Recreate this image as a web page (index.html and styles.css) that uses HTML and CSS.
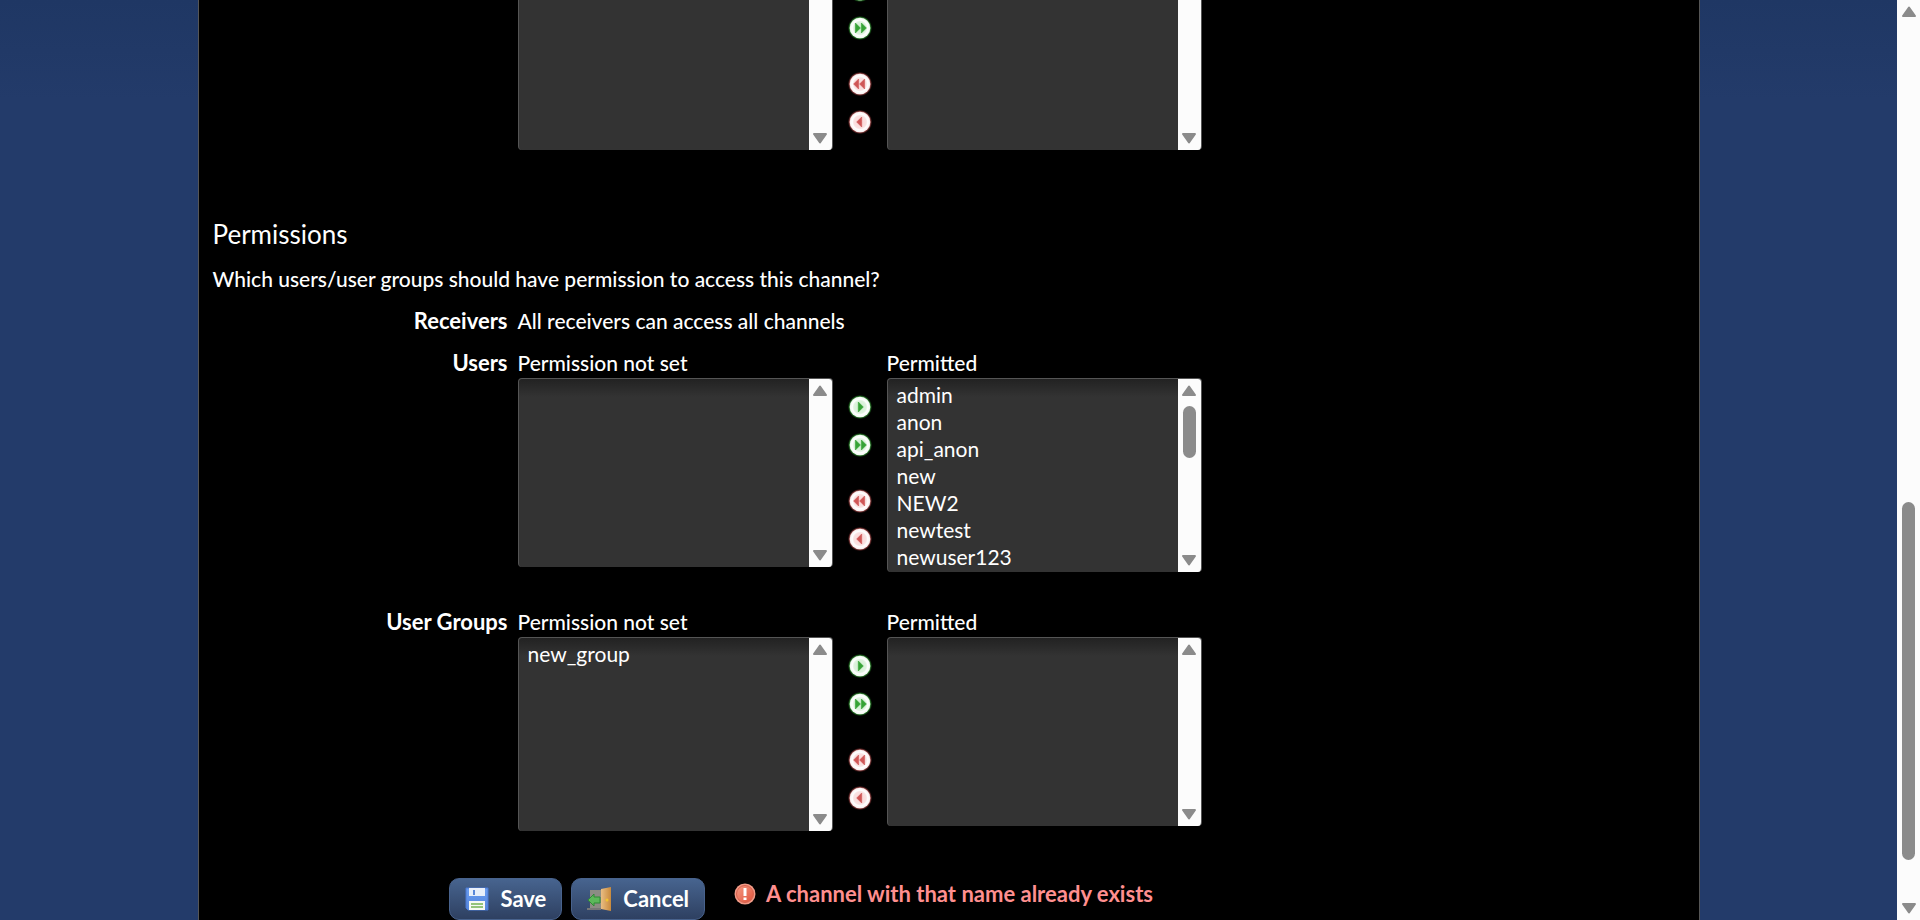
FILE: index.html
```
<!DOCTYPE html>
<html lang="en">
<head>
<meta charset="utf-8">
<title>Channel permissions</title>
<link rel="stylesheet" href="styles.css">
</head>
<body>
<svg class="defs" aria-hidden="true">
  <defs>
    <radialGradient id="green-glow"><stop offset="0.84" stop-color="#4aa54a"/><stop offset="1" stop-color="#0a4a0a" stop-opacity="0.2"/></radialGradient>
    <radialGradient id="red-glow"><stop offset="0.84" stop-color="#c06a6a"/><stop offset="1" stop-color="#5a1818" stop-opacity="0.2"/></radialGradient>
    <radialGradient id="green-face"><stop offset="0" stop-color="#cdeecd"/><stop offset="0.6" stop-color="#dff3df"/><stop offset="0.75" stop-color="#fff"/><stop offset="1" stop-color="#eef5ee"/></radialGradient>
    <radialGradient id="red-face"><stop offset="0" stop-color="#fbd6d6"/><stop offset="0.6" stop-color="#fae2e2"/><stop offset="0.75" stop-color="#fff"/><stop offset="1" stop-color="#f6eeee"/></radialGradient>
    <linearGradient id="alert" x1="0" y1="0" x2="1" y2="1"><stop offset="0" stop-color="#f59a82"/><stop offset="1" stop-color="#e0533c"/></linearGradient>
    <linearGradient id="disk" x1="0" y1="0" x2="0" y2="1"><stop offset="0" stop-color="#6a9df0"/><stop offset="1" stop-color="#5585dc"/></linearGradient>
    <linearGradient id="door" x1="0" y1="0" x2="1" y2="0"><stop offset="0" stop-color="#e9bd83"/><stop offset="1" stop-color="#c98a3c"/></linearGradient>
  </defs>
  <symbol id="add" viewBox="0 0 24 24"><circle cx="12" cy="12" r="12" fill="url(#green-glow)"/><circle cx="12" cy="12" r="10.3" fill="url(#green-face)"/><path d="M10.3 7l5 5-5 5z" fill="#36a336" stroke="#36a336" stroke-width=".6"/></symbol>
  <symbol id="add-all" viewBox="0 0 24 24"><circle cx="12" cy="12" r="12" fill="url(#green-glow)"/><circle cx="12" cy="12" r="10.3" fill="url(#green-face)"/><path d="M7.4 7l5 5-5 5zM13.4 7l5 5-5 5z" fill="#36a336" stroke="#36a336" stroke-width=".6"/></symbol>
  <symbol id="remove-all" viewBox="0 0 24 24"><circle cx="12" cy="12" r="12" fill="url(#red-glow)"/><circle cx="12" cy="12" r="10.3" fill="url(#red-face)"/><path d="M10.6 7l-5 5 5 5zM16.6 7l-5 5 5 5z" fill="#cf5656" stroke="#cf5656" stroke-width=".6"/></symbol>
  <symbol id="remove" viewBox="0 0 24 24"><circle cx="12" cy="12" r="12" fill="url(#red-glow)"/><circle cx="12" cy="12" r="10.3" fill="url(#red-face)"/><path d="M13.7 7l-5 5 5 5z" fill="#cf5656" stroke="#cf5656" stroke-width=".6"/></symbol>
  <symbol id="up" viewBox="0 0 16 12"><path d="M8 1.5L14 10H2z" fill="#8b8b8b" stroke="#8b8b8b" stroke-width="2" stroke-linejoin="round"/></symbol>
  <symbol id="down" viewBox="0 0 16 12"><path d="M8 10.5L14 2H2z" fill="#8b8b8b" stroke="#8b8b8b" stroke-width="2" stroke-linejoin="round"/></symbol>
</svg>

<div class="window">
  <div class="backdrop">
    <main class="page">
      <div class="row">
        <span class="row-label"></span>
        <div class="picker untitled">
          <div class="choice">
            <div class="listbox"><select multiple aria-label="Available"></select><div class="bar"><svg><use href="#up"/></svg><svg><use href="#down"/></svg></div></div>
          </div>
          <div class="moves">
            <button type="button" aria-label="Add"><svg><use href="#add"/></svg></button>
            <button type="button" aria-label="Add all"><svg><use href="#add-all"/></svg></button>
            <button type="button" aria-label="Remove all" class="split"><svg><use href="#remove-all"/></svg></button>
            <button type="button" aria-label="Remove"><svg><use href="#remove"/></svg></button>
          </div>
          <div class="choice">
            <div class="listbox"><select multiple aria-label="Selected"></select><div class="bar"><svg><use href="#up"/></svg><svg><use href="#down"/></svg></div></div>
          </div>
        </div>
      </div>

      <h2>Permissions</h2>
      <p>Which users/user groups should have permission to access this channel?</p>

      <div class="row">
        <span class="row-label">Receivers</span>
        <span>All receivers can access all channels</span>
      </div>

      <div class="row">
        <span class="row-label">Users</span>
        <div class="picker">
          <div class="choice">
            <label for="users-unset">Permission not set</label>
            <div class="listbox"><select multiple id="users-unset"></select><div class="bar"><svg><use href="#up"/></svg><svg><use href="#down"/></svg></div></div>
          </div>
          <div class="moves">
            <button type="button" aria-label="Permit user"><svg><use href="#add"/></svg></button>
            <button type="button" aria-label="Permit all users"><svg><use href="#add-all"/></svg></button>
            <button type="button" aria-label="Remove all users" class="split"><svg><use href="#remove-all"/></svg></button>
            <button type="button" aria-label="Remove user"><svg><use href="#remove"/></svg></button>
          </div>
          <div class="choice">
            <label for="users-permitted">Permitted</label>
            <div class="listbox filled"><select multiple id="users-permitted">
              <option>admin</option><option>anon</option><option>api_anon</option><option>new</option><option>NEW2</option><option>newtest</option><option>newuser123</option>
            </select><div class="bar"><svg><use href="#up"/></svg><span class="thumb"></span><svg><use href="#down"/></svg></div></div>
          </div>
        </div>
      </div>

      <div class="row">
        <span class="row-label">User Groups</span>
        <div class="picker">
          <div class="choice">
            <label for="groups-unset">Permission not set</label>
            <div class="listbox filled"><select multiple id="groups-unset"><option>new_group</option></select><div class="bar"><svg><use href="#up"/></svg><svg><use href="#down"/></svg></div></div>
          </div>
          <div class="moves">
            <button type="button" aria-label="Permit group"><svg><use href="#add"/></svg></button>
            <button type="button" aria-label="Permit all groups"><svg><use href="#add-all"/></svg></button>
            <button type="button" aria-label="Remove all groups" class="split"><svg><use href="#remove-all"/></svg></button>
            <button type="button" aria-label="Remove group"><svg><use href="#remove"/></svg></button>
          </div>
          <div class="choice">
            <label for="groups-permitted">Permitted</label>
            <div class="listbox"><select multiple id="groups-permitted"></select><div class="bar"><svg><use href="#up"/></svg><svg><use href="#down"/></svg></div></div>
          </div>
        </div>
      </div>

      <div class="actions">
        <button type="button" class="action">
          <svg viewBox="0 0 24 24" aria-hidden="true"><path d="M1 1h22v22H3l-2-2z" fill="url(#disk)" stroke="#4a78d0"/><path d="M4 1h16v8H4z" fill="#e8effa"/><path d="M8 3h2v5H8z" fill="#5b88d8"/><path d="M4 14h16v9H4z" fill="#f5f9f2"/><path d="M6 16h12v2H6zM6 19h12v2H6z" fill="#93c47a"/></svg>Save</button>
        <button type="button" class="action">
          <svg viewBox="0 0 24 24" aria-hidden="true"><path d="M3 3h12v18H3z" fill="#8c8c84"/><path d="M0 22h14" stroke="#777" stroke-width="2"/><path d="M14 2l10-2v24l-10-2z" fill="url(#door)"/><circle cx="20" cy="13" r="1.5" fill="#f3c62f"/><path d="M1 13l6-6v3h6v6H7v3z" fill="#5cb85a" stroke="#2f8a35"/></svg>Cancel</button>
        <span class="error" role="alert">
          <svg viewBox="0 0 22 22" aria-hidden="true"><circle cx="11" cy="11" r="10.5" fill="#f09a86"/><circle cx="11" cy="11" r="8.5" fill="url(#alert)" stroke="#d8614e"/><path d="M11 5v8M11 14.5v2.5" stroke="#fff" stroke-width="3"/></svg>A channel with that name already exists</span>
      </div>
    </main>
  </div>
  <div class="bar window-bar"><svg><use href="#up"/></svg><span class="thumb"></span><svg><use href="#down"/></svg></div>
</div>
</body>
</html>
```
FILE: styles.css
```
* { box-sizing: border-box; }

body {
  margin: 0;
  background: #000;
  color: #fff;
  font: 500 21px/26px Lato, "Open Sans", sans-serif;
}

.defs { position: absolute; width: 0; height: 0; }

.window { display: flex; height: 100vh; }

.backdrop {
  flex: 1;
  display: flex;
  justify-content: center;
  align-items: flex-end;
  overflow: hidden;
  background: linear-gradient(#1f3764, #233b6a 100px);
}

.page {
  width: 100%;
  max-width: 1502px;
  padding: 0 14px;
  background: #000;
  border: solid #555;
  border-width: 0 1px;
}

h2 { margin: 68px 0 0; font-size: 26px; font-weight: 400; line-height: 32px; }
p { margin: 16px 0; }

.row { display: flex; gap: 10px; margin-bottom: 16px; }
.row-label { width: 295px; text-align: right; font-size: 22px; font-weight: 700; }

.picker { display: flex; align-items: stretch; }
.choice { width: 315px; min-height: 243px; }
.choice label { display: block; margin-bottom: 2px; }

.listbox {
  display: flex;
  height: 189px;
  overflow: hidden;
  background: linear-gradient(#222, #333 18px);
  border: 1px solid #555;
  border-bottom: 0;
  border-radius: 4px;
}
.listbox.filled { height: 194px; }

select {
  flex: 1;
  min-width: 0;
  height: 100%;
  padding: 3px 0 0 7px;
  overflow: hidden;
  background: transparent;
  border: 0;
  color: #fff;
  font: inherit;
  scrollbar-width: none;
}
option { min-height: 27px; padding: 0 2px; line-height: 27px; }

.bar {
  display: flex;
  flex-direction: column;
  justify-content: space-between;
  align-items: center;
  width: 23px;
  padding: 6px 0;
  background: #fcfcfc;
}
.bar svg { width: 16px; height: 12px; }
.bar .thumb { width: 13px; height: 52px; margin: 9px 0 auto; background: #8b8b8b; border-radius: 7px; }
.window-bar .thumb { height: 358px; margin: auto 0 42px; }

.moves { display: flex; flex-direction: column; gap: 14px; width: 54px; padding-top: 45px; align-items: center; }
.moves button { display: block; width: 24px; height: 24px; padding: 0; background: none; border: 0; }
.moves svg { display: block; width: 24px; height: 24px; }
.moves .split { margin-top: 18px; }

.untitled .choice { min-height: 0; }
.untitled .moves { padding-top: 17px; }

.actions { display: flex; gap: 9px; margin-top: 26px; padding-left: 236px; }
.action {
  display: flex;
  align-items: center;
  gap: 12px;
  height: 42px;
  padding: 0 15px;
  background: linear-gradient(#47648f, #2e4061);
  border: 1px solid #48628c;
  border-radius: 10px;
  color: #fff;
  font: inherit;
  font-size: 22px;
  font-weight: 700;
}
.action svg { width: 24px; height: 24px; }
.error { display: flex; align-items: center; gap: 10px; height: 32px; margin-left: 20px; color: #ff8f8f; font-size: 22px; font-weight: 700; }
.error svg { width: 22px; height: 22px; }
```
